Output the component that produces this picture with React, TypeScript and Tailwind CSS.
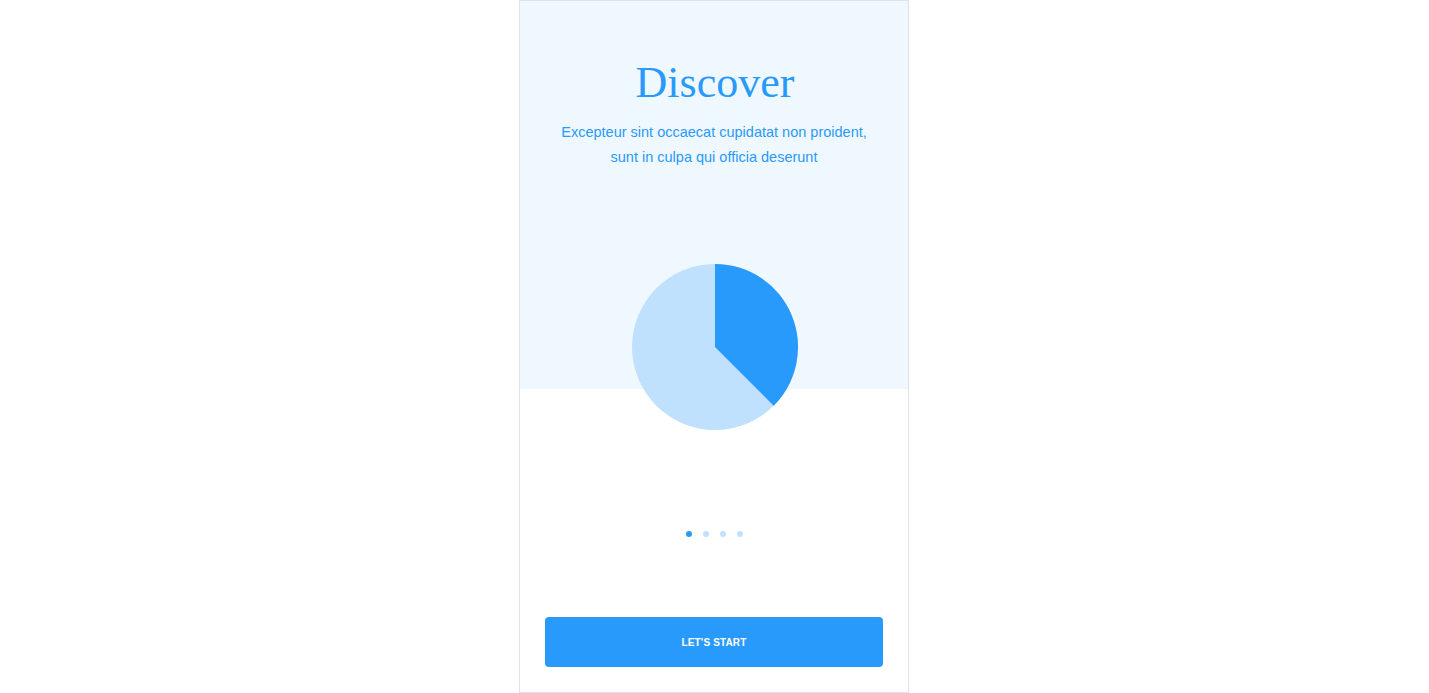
import React from "react";

function Pie() {
  const r = 83;
  const cx = 83;
  const cy = 83;
  const a = (135 * Math.PI) / 180;
  const x = cx + r * Math.sin(a);
  const y = cy - r * Math.cos(a);
  return (
    <svg width="166" height="166" viewBox="0 0 166 166">
      <circle cx={cx} cy={cy} r={r} fill="#bfe1fd" />
      <path d={`M${cx} ${cy} L${cx} ${cy - r} A${r} ${r} 0 0 1 ${x} ${y} Z`} fill="#289afb" />
    </svg>
  );
}

export default function App() {
  return (
    <div className="min-h-[693px] w-full bg-white flex justify-center">
      <div className="mr-[1px] w-[390px] h-[693px] border border-[#e2e2e2] flex flex-col items-center bg-[linear-gradient(to_bottom,#f0f8ff_388px,#ffffff_388px)]">
        <h1
          className="mt-[60px] ml-[2px] text-[44px] leading-[44px] text-[#289afb]"
          style={{ fontFamily: '"Liberation Serif", Georgia, serif' }}
        >
          Discover
        </h1>
        <p
          className="mt-[15px] text-[14.5px] leading-[25px] text-[#289afb] text-center"
          style={{ fontFamily: '"Liberation Sans", Arial, sans-serif' }}
        >
          Excepteur sint occaecat cupidatat non proident,
          <br />
          sunt in culpa qui officia deserunt
        </p>
        <div className="mt-[94px] ml-[2px]">
          <Pie />
        </div>
        <div className="mt-[101px] flex gap-[11px]">
          <span className="w-[6px] h-[6px] rounded-full bg-[#289afb]" />
          <span className="w-[6px] h-[6px] rounded-full bg-[#bfe1fd]" />
          <span className="w-[6px] h-[6px] rounded-full bg-[#bfe1fd]" />
          <span className="w-[6px] h-[6px] rounded-full bg-[#bfe1fd]" />
        </div>
        <div className="mt-auto w-full px-[25px] pb-[25px]">
          <button
            className="w-full h-[50px] rounded-[4px] bg-[#289afb] text-white text-[10px] font-bold tracking-[0.15px]"
            style={{ fontFamily: '"Liberation Sans", Arial, sans-serif' }}
          >
            LET'S START
          </button>
        </div>
      </div>
    </div>
  );
}
